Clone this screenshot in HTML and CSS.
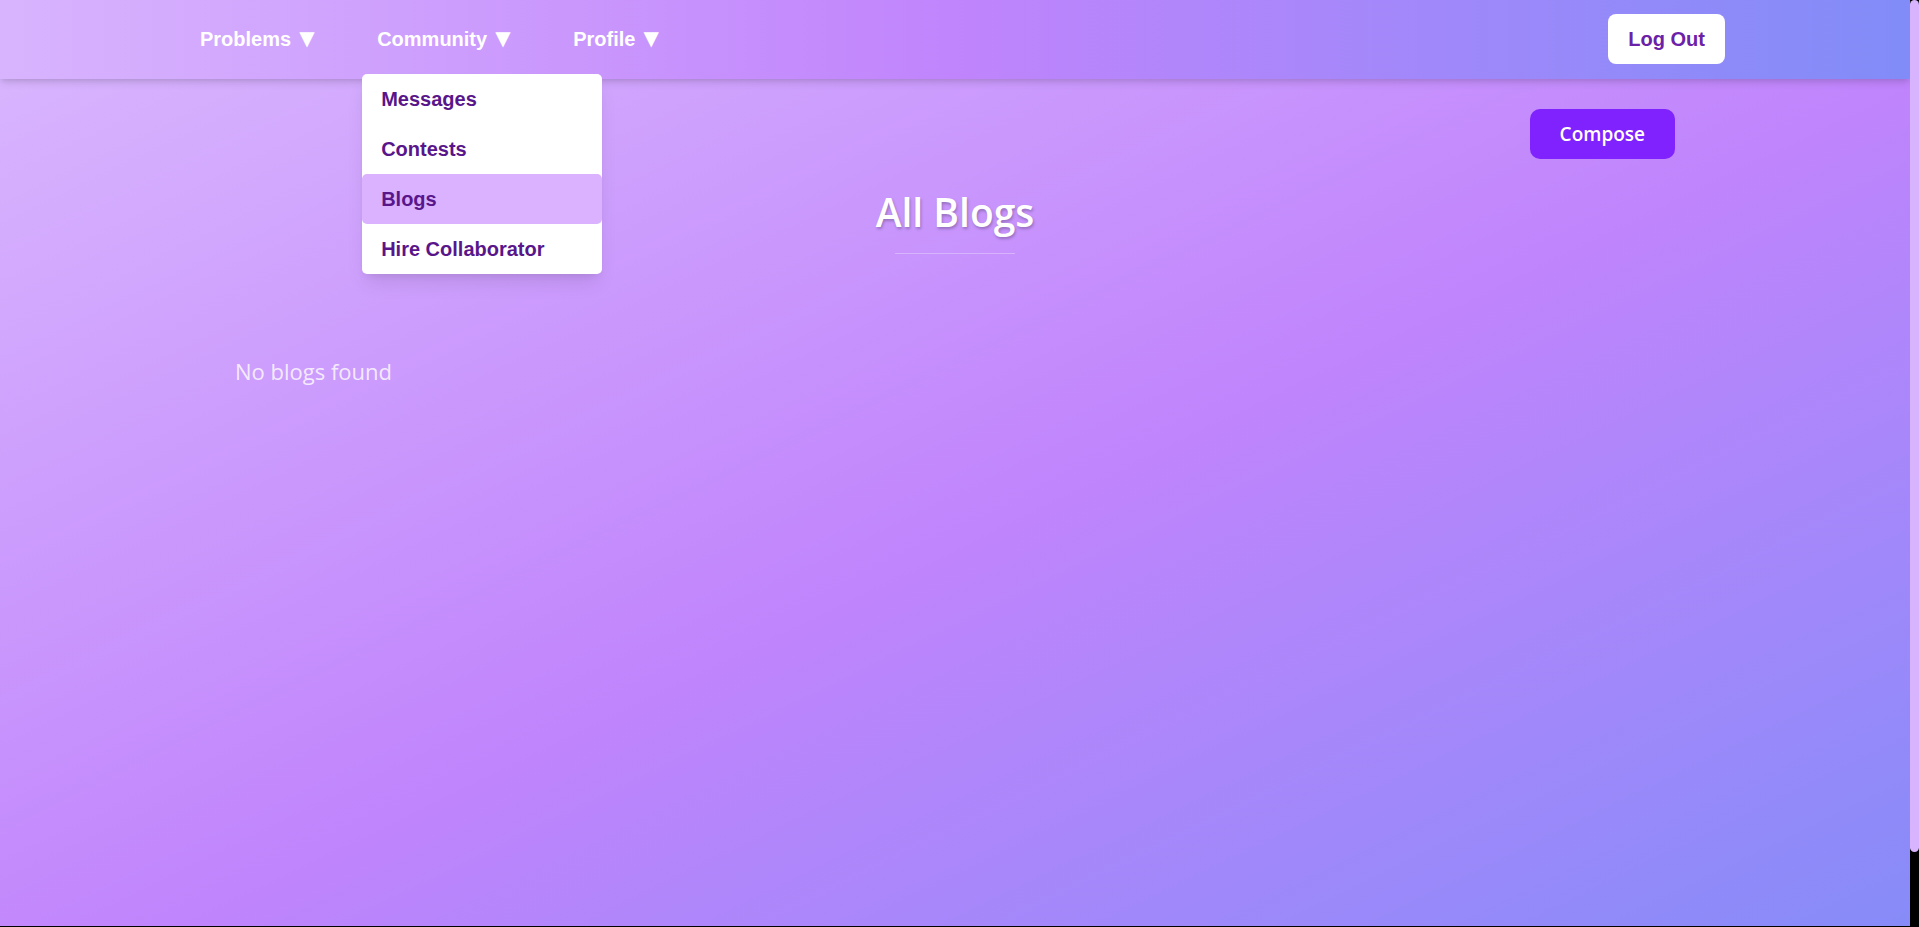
FILE: index.html
```html
<!DOCTYPE html>
<html lang="en">
<head>
  <meta charset="utf-8">
  <title>All Blogs</title>
  <link rel="stylesheet" href="styles.css">
</head>
<body>
  <div class="viewport">
    <div class="page">
      <header class="navbar">
        <div class="navbar-inner">
          <nav class="nav-menus">
            <button class="nav-button" type="button">Problems <span class="caret">▼</span></button>
            <div class="nav-item">
              <button class="nav-button" type="button" aria-expanded="true">Community <span class="caret">▼</span></button>
              <div class="dropdown">
                <a class="dropdown-link" href="#messages">Messages</a>
                <a class="dropdown-link" href="#contests">Contests</a>
                <a class="dropdown-link active" href="#blogs">Blogs</a>
                <a class="dropdown-link" href="#hire">Hire Collaborator</a>
              </div>
            </div>
            <button class="nav-button" type="button">Profile <span class="caret">▼</span></button>
          </nav>
          <button class="logout" type="button">Log Out</button>
        </div>
      </header>
      <main class="content">
        <div class="container">
          <div class="actions">
            <button class="compose" type="button">Compose</button>
          </div>
          <h1 class="title">All Blogs</h1>
          <p class="empty">No blogs found</p>
        </div>
      </main>
    </div>
    <div class="scroll-track"><div class="scroll-thumb"></div></div>
  </div>
</body>
</html>
```
FILE: styles.css
```css
* {
  box-sizing: border-box;
}

body {
  margin: 0;
  background: #000;
  font-family: "Segoe UI", "Open Sans", sans-serif;
  overflow: hidden;
}

button {
  border: 0;
  background: none;
  font: inherit;
  cursor: pointer;
}

.viewport {
  display: grid;
  grid-template-columns: 1fr 9px;
  height: calc(100vh - 1px);
}

.page {
  height: 100%;
  overflow: hidden;
}

.navbar {
  position: relative;
  z-index: 1;
  padding: 14px 0 15px;
  background: linear-gradient(to right, #d8b4fe, #c084fc, #818cf8);
  box-shadow: 0 5px 8px -1px rgba(0, 0, 0, 0.1), 0 3px 5px -2px rgba(0, 0, 0, 0.1);
  font-family: Arial, "Liberation Sans", "DejaVu Sans", sans-serif;
  font-size: 20px;
  font-weight: 700;
  line-height: 30px;
}

.navbar-inner {
  display: flex;
  justify-content: space-between;
  align-items: center;
  max-width: 1540px;
  margin: 0 auto;
}

.nav-menus {
  display: flex;
  gap: 30px;
}

.nav-item {
  position: relative;
}

.nav-button {
  display: flex;
  align-items: center;
  gap: 8px;
  padding: 10px 15px;
  color: #fff;
}

.caret {
  width: 18px;
  padding-bottom: 2px;
  font-family: "DejaVu Sans", sans-serif;
  font-weight: 400;
  line-height: 28px;
  text-align: left;
}

.dropdown {
  position: absolute;
  top: 60px;
  left: 0;
  width: 240px;
  background: #fff;
  border-radius: 5px;
  box-shadow: 0 12px 19px -4px rgba(0, 0, 0, 0.1), 0 5px 8px -5px rgba(0, 0, 0, 0.1);
}

.dropdown-link {
  display: block;
  padding: 10px 19px;
  border-radius: 5px;
  color: #59168b;
  text-decoration: none;
}

.dropdown-link.active {
  background: #dab2ff;
}

.logout {
  padding: 10px 20px;
  border-radius: 8px;
  background: #fff;
  color: #6b21a8;
}

.content {
  min-height: 100vh;
  padding-top: 30px;
  background: linear-gradient(to bottom right, #d8b4fe, #c084fc, #818cf8);
}

.container {
  max-width: 1440px;
  margin: 0 auto;
}

.actions {
  display: flex;
  justify-content: flex-end;
}

.compose {
  padding: 10px 30px;
  border-radius: 10px;
  background: #7f22fe;
  color: #fff;
  font-size: 19px;
  font-weight: 600;
  line-height: 30px;
}

.title {
  margin: 28px 0 0;
  color: #fff;
  font-size: 39px;
  font-weight: 600;
  line-height: 50px;
  text-align: center;
  text-shadow: 1px 2px 3px rgba(0, 0, 0, 0.25);
}

.title::after {
  content: "";
  display: block;
  width: 120px;
  height: 1px;
  margin: 16px auto 0;
  background: rgba(255, 255, 255, 0.3);
}

.empty {
  margin: 100px 0 0;
  color: rgba(255, 255, 255, 0.8);
  font-size: 22px;
  line-height: 34px;
}

.scroll-track {
  background: #000;
}

.scroll-thumb {
  height: 92%;
  border-radius: 5px;
  background: #d8b4fe;
}
```
